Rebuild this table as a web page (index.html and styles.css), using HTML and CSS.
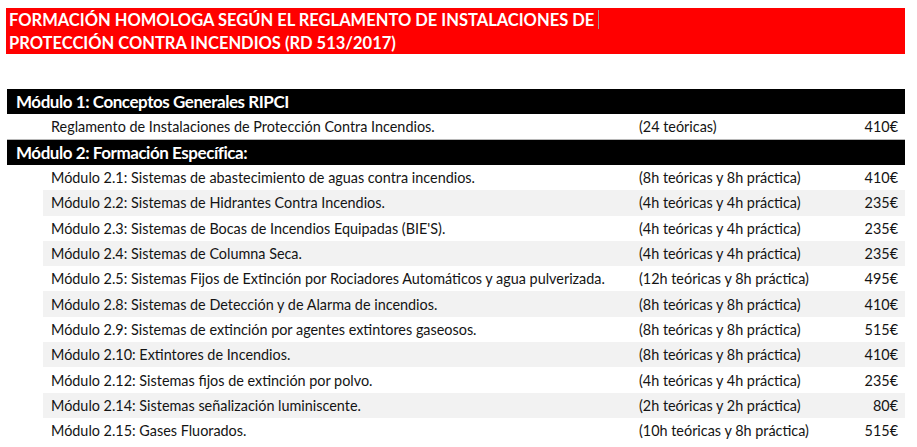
FILE: index.html
```html
<!DOCTYPE html>
<html lang="es">
<head>
<meta charset="utf-8">
<title>Formación RIPCI</title>
<link rel="stylesheet" href="styles.css">
</head>
<body>
<div class="page">
  <div class="banner">
    <div class="banner-line">FORMACIÓN HOMOLOGA SEGÚN EL REGLAMENTO DE INSTALACIONES DE<span class="caret"></span></div>
    <div class="banner-line">PROTECCIÓN CONTRA INCENDIOS (RD 513/2017)</div>
  </div>

  <div class="module-bar">Módulo 1: Conceptos Generales RIPCI</div>
  <div class="row row-main">
    <span class="desc">Reglamento de Instalaciones de Protección Contra Incendios.</span>
    <span class="hours">(24 teóricas)</span>
    <span class="price">410€</span>
  </div>

  <div class="module-bar">Módulo 2: Formación Específica:</div>
  <div class="list">
    <div class="row"><span class="desc">Módulo 2.1: Sistemas de abastecimiento de aguas contra incendios.</span><span class="hours">(8h teóricas y 8h práctica)</span><span class="price">410€</span></div>
    <div class="row"><span class="desc">Módulo 2.2: Sistemas de Hidrantes Contra Incendios.</span><span class="hours">(4h teóricas y 4h práctica)</span><span class="price">235€</span></div>
    <div class="row"><span class="desc">Módulo 2.3: Sistemas de Bocas de Incendios Equipadas (BIE'S).</span><span class="hours">(4h teóricas y 4h práctica)</span><span class="price">235€</span></div>
    <div class="row"><span class="desc">Módulo 2.4: Sistemas de Columna Seca.</span><span class="hours">(4h teóricas y 4h práctica)</span><span class="price">235€</span></div>
    <div class="row"><span class="desc">Módulo 2.5: Sistemas Fijos de Extinción por Rociadores Automáticos y agua pulverizada.</span><span class="hours">(12h teóricas y 8h práctica)</span><span class="price">495€</span></div>
    <div class="row"><span class="desc">Módulo 2.8: Sistemas de Detección y de Alarma de incendios.</span><span class="hours">(8h teóricas y 8h práctica)</span><span class="price">410€</span></div>
    <div class="row"><span class="desc">Módulo 2.9: Sistemas de extinción por agentes extintores gaseosos.</span><span class="hours">(8h teóricas y 8h práctica)</span><span class="price">515€</span></div>
    <div class="row"><span class="desc">Módulo 2.10: Extintores de Incendios.</span><span class="hours">(8h teóricas y 8h práctica)</span><span class="price">410€</span></div>
    <div class="row"><span class="desc">Módulo 2.12: Sistemas fijos de extinción por polvo.</span><span class="hours">(4h teóricas y 4h práctica)</span><span class="price">235€</span></div>
    <div class="row"><span class="desc">Módulo 2.14: Sistemas señalización luminiscente.</span><span class="hours">(2h teóricas y 2h práctica)</span><span class="price">80€</span></div>
    <div class="row"><span class="desc">Módulo 2.15: Gases Fluorados.</span><span class="hours">(10h teóricas y 8h práctica)</span><span class="price">515€</span></div>
  </div>
</div>
</body>
</html>
```

FILE: styles.css
```css
* { box-sizing: border-box; }

body {
  margin: 0;
  background: #ffffff;
  font-family: Lato, "Open Sans", "Liberation Sans", sans-serif;
  color: #141414;
}

.page {
  width: 905px;
  padding: 8px 0 0 6px;
}

.banner {
  background: #ff0000;
  height: 46px;
  padding: 0 0 0 3px;
  color: #ffffff;
  font-weight: 700;
  font-size: 16.5px;
  margin-bottom: 35px;
}

.banner-line {
  height: 23px;
  display: flex;
  align-items: center;
}

.caret {
  display: inline-block;
  width: 1px;
  height: 19px;
  background: #9a9a9a;
  margin-left: 4px;
}

.module-bar {
  background: #000000;
  color: #ffffff;
  font-weight: 700;
  font-size: 17px;
  letter-spacing: -0.45px;
  height: 25px;
  line-height: 25px;
  padding-left: 9px;
  margin-left: 1px;
}

.row {
  display: grid;
  grid-template-columns: 588px 1fr auto;
  align-items: center;
  height: 25.3px;
  font-size: 14.4px;
  padding: 0 7px 0 8px;
}

.row-main {
  height: 26px;
  margin-left: 1px;
  padding-left: 44px;
  border-bottom: 1px solid #b8b8b8;
}

.list {
  margin-left: 37px;
}

.list .row:nth-child(even) {
  background: #f2f2f2;
}

.price {
  text-align: right;
}
```
